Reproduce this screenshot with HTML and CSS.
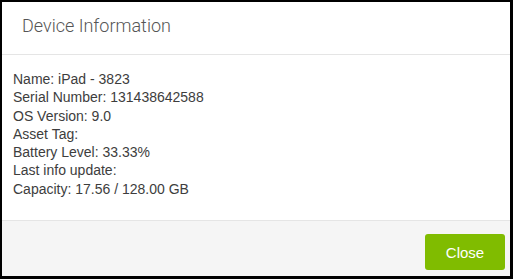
FILE: index.html
```html
<!DOCTYPE html>
<html>
<head>
<meta charset="utf-8">
<link rel="stylesheet" href="styles.css">
</head>
<body>
<div class="modal">
  <div class="modal-header">
    <h4 class="modal-title">Device Information</h4>
  </div>
  <div class="modal-body">
    <div class="line">Name: iPad - 3823</div>
    <div class="line">Serial Number: 131438642588</div>
    <div class="line">OS Version: 9.0</div>
    <div class="line">Asset Tag:</div>
    <div class="line">Battery Level: 33.33%</div>
    <div class="line">Last info update:</div>
    <div class="line">Capacity: 17.56 / 128.00 GB</div>
  </div>
  <div class="modal-footer">
    <button class="btn-close">Close</button>
  </div>
</div>
</body>
</html>
```
FILE: styles.css
```css
html, body {
  margin: 0;
  padding: 0;
  background: #000;
}
.modal {
  box-sizing: border-box;
  width: 513px;
  height: 279px;
  border-style: solid;
  border-color: #000;
  border-width: 2px 3px 3px 2px;
  background: #fff;
  display: flex;
  flex-direction: column;
  font-family: "Liberation Sans", Arial, sans-serif;
}
.modal-header {
  height: 53px;
  border-bottom: 1px solid #e5e5e5;
  padding: 0 20px;
  display: flex;
  align-items: center;
  box-sizing: border-box;
}
.modal-title {
  margin: 0;
  font-family: Roboto, "Liberation Sans", sans-serif;
  font-weight: 300;
  font-size: 18px;
  color: #555;
  position: relative;
  top: -3px;
}
.modal-body {
  flex: 1;
  padding: 15px 11px 0;
  font-size: 14px;
  line-height: 18.3px;
  color: #3d3d3d;
}
.modal-footer {
  height: 56px;
  box-sizing: border-box;
  border-top: 1px solid #e5e5e5;
  background: #f5f5f5;
  display: flex;
  justify-content: flex-end;
  align-items: flex-start;
  padding: 13px 5px 0 0;
}
.btn-close {
  width: 80px;
  height: 36px;
  border: none;
  border-radius: 3px;
  background: #80bc00;
  color: #fff;
  font-family: "Liberation Sans", Arial, sans-serif;
  font-size: 15px;
  padding: 0;
}
```
